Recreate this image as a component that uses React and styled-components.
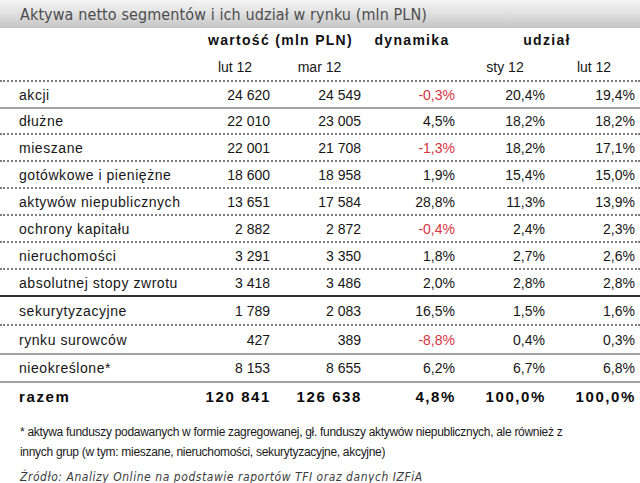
import React from "react";
import styled, { createGlobalStyle, css } from "styled-components";

const Global = createGlobalStyle`
  html, body { margin: 0; padding: 0; background: #fff; }
  body { width: 640px; height: 483px; overflow: hidden; }
`;

const Page = styled.div`
  width: 640px;
  font-family: "Liberation Sans", Arial, sans-serif;
  color: #161616;
`;

const TitleBar = styled.div`
  height: 28px;
  display: flex;
  align-items: center;
  padding-left: 20px;
  background: linear-gradient(to bottom, #f4f4f4 0%, #e2e2e2 45%, #c4c4c4 100%);
  font-family: "DejaVu Sans Condensed", "DejaVu Sans", sans-serif;
  font-size: 16px;
  color: #4d4d4d;
  letter-spacing: 0.1px;
`;

const COLS = "19px 181px 70px 91px 94px 90px 90px 5px";

const lines = {
  dotted: css`border-bottom: 2px dotted #7d7d7d;`,
  solid: css`border-bottom: 2px solid #a2a2a2;`,
  dark: css`border-bottom: 2px solid #333;`,
  none: css`border-bottom: 2px solid transparent;`,
};

const Row = styled.div`
  display: grid;
  grid-template-columns: ${COLS};
  align-items: center;
  box-sizing: border-box;
  height: ${(p) => p.$h}px;
  font-size: 14px;
  ${(p) => lines[p.$line || "none"]}
  ${(p) =>
    p.$bold &&
    css`
      font-weight: bold;
      font-size: 15px;
      letter-spacing: 1.6px;
      color: #0a0a0a;
    `}
`;

const HeadRow = styled(Row)`
  font-weight: bold;
  letter-spacing: 1.3px;
  font-size: 14px;
  color: #111;
`;

const Label = styled.div`
  grid-column: 2;
  white-space: nowrap;
  letter-spacing: ${(p) => (p.$bold ? "1.6px" : "0.55px")};
`;

const Num = styled.div`
  text-align: right;
  white-space: nowrap;
  color: ${(p) => (p.$neg ? "#d63440" : "inherit")};
  ${(p) => p.$bold && css`margin-right: -1px;`}
`;

const Head = styled.div`
  grid-column: ${(p) => p.$col};
  text-align: center;
  white-space: nowrap;
  padding-left: ${(p) => p.$shift || 0}px;
`;

const Notes = styled.div`
  padding: 11px 0 0 20px;
`;

const Footnote = styled.p`
  margin: 0;
  font-family: "Liberation Sans", Arial, sans-serif;
  font-size: 12px;
  letter-spacing: -0.3px;
  line-height: 20px;
  color: #1a1a1a;
  white-space: nowrap;
`;

const Source = styled.p`
  margin: 8px 0 0;
  font-family: "DejaVu Sans Condensed", "DejaVu Sans", sans-serif;
  font-style: italic;
  font-size: 12px;
  line-height: 14px;
  letter-spacing: 0.55px;
  color: #3c3c3c;
  white-space: nowrap;
`;

const data = [
  ["akcji", "24 620", "24 549", "-0,3%", "20,4%", "19,4%", 27, "solid"],
  ["dłużne", "22 010", "23 005", "4,5%", "18,2%", "18,2%", 26, "dotted"],
  ["mieszane", "22 001", "21 708", "-1,3%", "18,2%", "17,1%", 27, "dotted"],
  ["gotówkowe i pieniężne", "18 600", "18 958", "1,9%", "15,4%", "15,0%", 27, "dotted"],
  ["aktywów niepublicznych", "13 651", "17 584", "28,8%", "11,3%", "13,9%", 27, "dotted"],
  ["ochrony kapitału", "2 882", "2 872", "-0,4%", "2,4%", "2,3%", 27, "dotted"],
  ["nieruchomości", "3 291", "3 350", "1,8%", "2,7%", "2,6%", 27, "dotted"],
  ["absolutnej stopy zwrotu", "3 418", "3 486", "2,0%", "2,8%", "2,8%", 27, "dark"],
  ["sekurytyzacyjne", "1 789", "2 083", "16,5%", "1,5%", "1,6%", 29, "dotted"],
  ["rynku surowców", "427", "389", "-8,8%", "0,4%", "0,3%", 29, "solid"],
  ["nieokreślone*", "8 153", "8 655", "6,2%", "6,7%", "6,8%", 28, "solid"],
];

export default function App() {
  return (
    <Page>
      <Global />
      <TitleBar>Aktywa netto segmentów i ich udział w rynku (mln PLN)</TitleBar>
      <HeadRow $h={26}>
        <Head $col="3 / span 2" $shift={-16}>wartość (mln PLN)</Head>
        <Head $col="5" $shift={8}>dynamika</Head>
        <Head $col="6 / span 2" $shift={4}>udział</Head>
      </HeadRow>
      <Row $h={28} $line="dotted">
        <Head $col="3">lut 12</Head>
        <Head $col="4" $shift={8}>mar 12</Head>
        <Head $col="6" $shift={10}>sty 12</Head>
        <Head $col="7" $shift={8}>lut 12</Head>
      </Row>
      {data.map(([label, a, b, d, s, l, h, line]) => (
        <Row key={label} $h={h} $line={line}>
          <Label>{label}</Label>
          <Num>{a}</Num>
          <Num>{b}</Num>
          <Num $neg={d.startsWith("-")}>{d}</Num>
          <Num>{s}</Num>
          <Num>{l}</Num>
        </Row>
      ))}
      <Row $h={28} $bold>
        <Label $bold>razem</Label>
        <Num $bold>120 841</Num>
        <Num $bold>126 638</Num>
        <Num $bold>4,8%</Num>
        <Num $bold>100,0%</Num>
        <Num $bold>100,0%</Num>
      </Row>
      <Notes>
        <Footnote>
          * aktywa funduszy podawanych w formie zagregowanej, gł. funduszy aktywów niepublicznych, ale również z
          <br />
          innych grup (w tym: mieszane, nieruchomości, sekurytyzacyjne, akcyjne)
        </Footnote>
        <Source>Źródło: Analizy Online na podstawie raportów TFI oraz danych IZFiA</Source>
      </Notes>
    </Page>
  );
}
